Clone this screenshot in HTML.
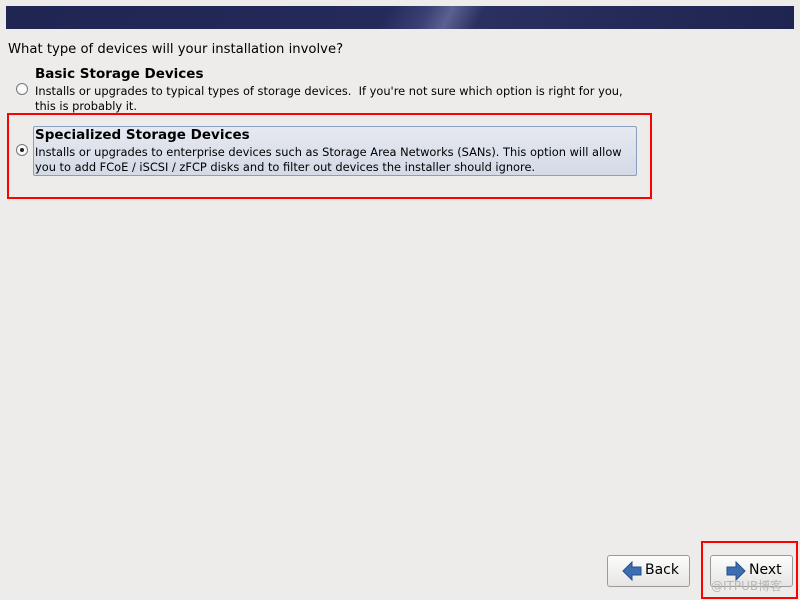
<!DOCTYPE html>
<html><head><style>
body{margin:0;width:800px;height:600px;background:#edeceb;font-family:"DejaVu Sans","Liberation Sans",sans-serif;position:relative;overflow:hidden;color:#000}
.banner{position:absolute;left:6px;top:6px;width:788px;height:23px;background:linear-gradient(115deg,#202552 0%,#242a5a 48%,#3a4074 53%,#5a6090 56%,#2a3060 60%,#1f2450 100%)}
.q{position:absolute;left:8px;top:42px;font-size:13.2px}
.t{position:absolute;left:35px;font-weight:bold;font-size:13.5px}
.d{position:absolute;left:35px;font-size:11.4px;line-height:15px}
.radio{position:absolute;width:10px;height:10px;border:1px solid #777;border-radius:50%;background:#fafafa}
.sel{position:absolute;left:33px;top:126px;width:602px;height:48px;border:1px solid #8aa0c0;border-radius:2px;background:linear-gradient(#e6e9f0,#d3dae6)}
.red{position:absolute;border:2px solid #f00}
.btn{position:absolute;top:555px;width:81px;height:30px;border:1px solid #9a9a9a;border-radius:3px;background:linear-gradient(#fdfdfd,#e6e5e3);font-size:14px}
.btn span{position:absolute;top:6px}
</style></head><body>
<div class="banner"></div>
<div class="q">What type of devices will your installation involve?</div>
<div class="t" style="top:66px">Basic Storage Devices</div>
<div class="radio" style="left:16px;top:83px"></div>
<div class="d" style="top:84px">Installs or upgrades to typical types of storage devices.&nbsp; If you're not sure which option is right for you,<br>this is probably it.</div>
<div class="sel"></div>
<div class="t" style="top:127px">Specialized Storage Devices</div>
<div class="radio" style="left:16px;top:144px"><div style="position:absolute;left:3px;top:3px;width:4px;height:4px;border-radius:50%;background:#222"></div></div>
<div class="d" style="top:145px">Installs or upgrades to enterprise devices such as Storage Area Networks (SANs). This option will allow<br>you to add FCoE / iSCSI / zFCP disks and to filter out devices the installer should ignore.</div>
<div class="red" style="left:7px;top:113px;width:641px;height:82px"></div>
<div class="btn" style="left:607px"><svg style="position:absolute;left:14px;top:5px" width="20" height="20"><path d="M1 10 L10 1 V6 H19 V14 H10 V19 Z" fill="#3d6eb0" stroke="#244e8a"/></svg><span style="left:37px">Back</span></div>
<div class="btn" style="left:710px"><svg style="position:absolute;left:15px;top:5px" width="20" height="20"><path d="M19 10 L10 1 V6 H1 V14 H10 V19 Z" fill="#3d6eb0" stroke="#244e8a"/></svg><span style="left:38px">Next</span></div>
<div style="position:absolute;left:711px;top:577px;font-size:12px;color:#b8b8b8">@ITPUB博客</div>
<div class="red" style="left:701px;top:541px;width:93px;height:54px"></div>
</body></html>
